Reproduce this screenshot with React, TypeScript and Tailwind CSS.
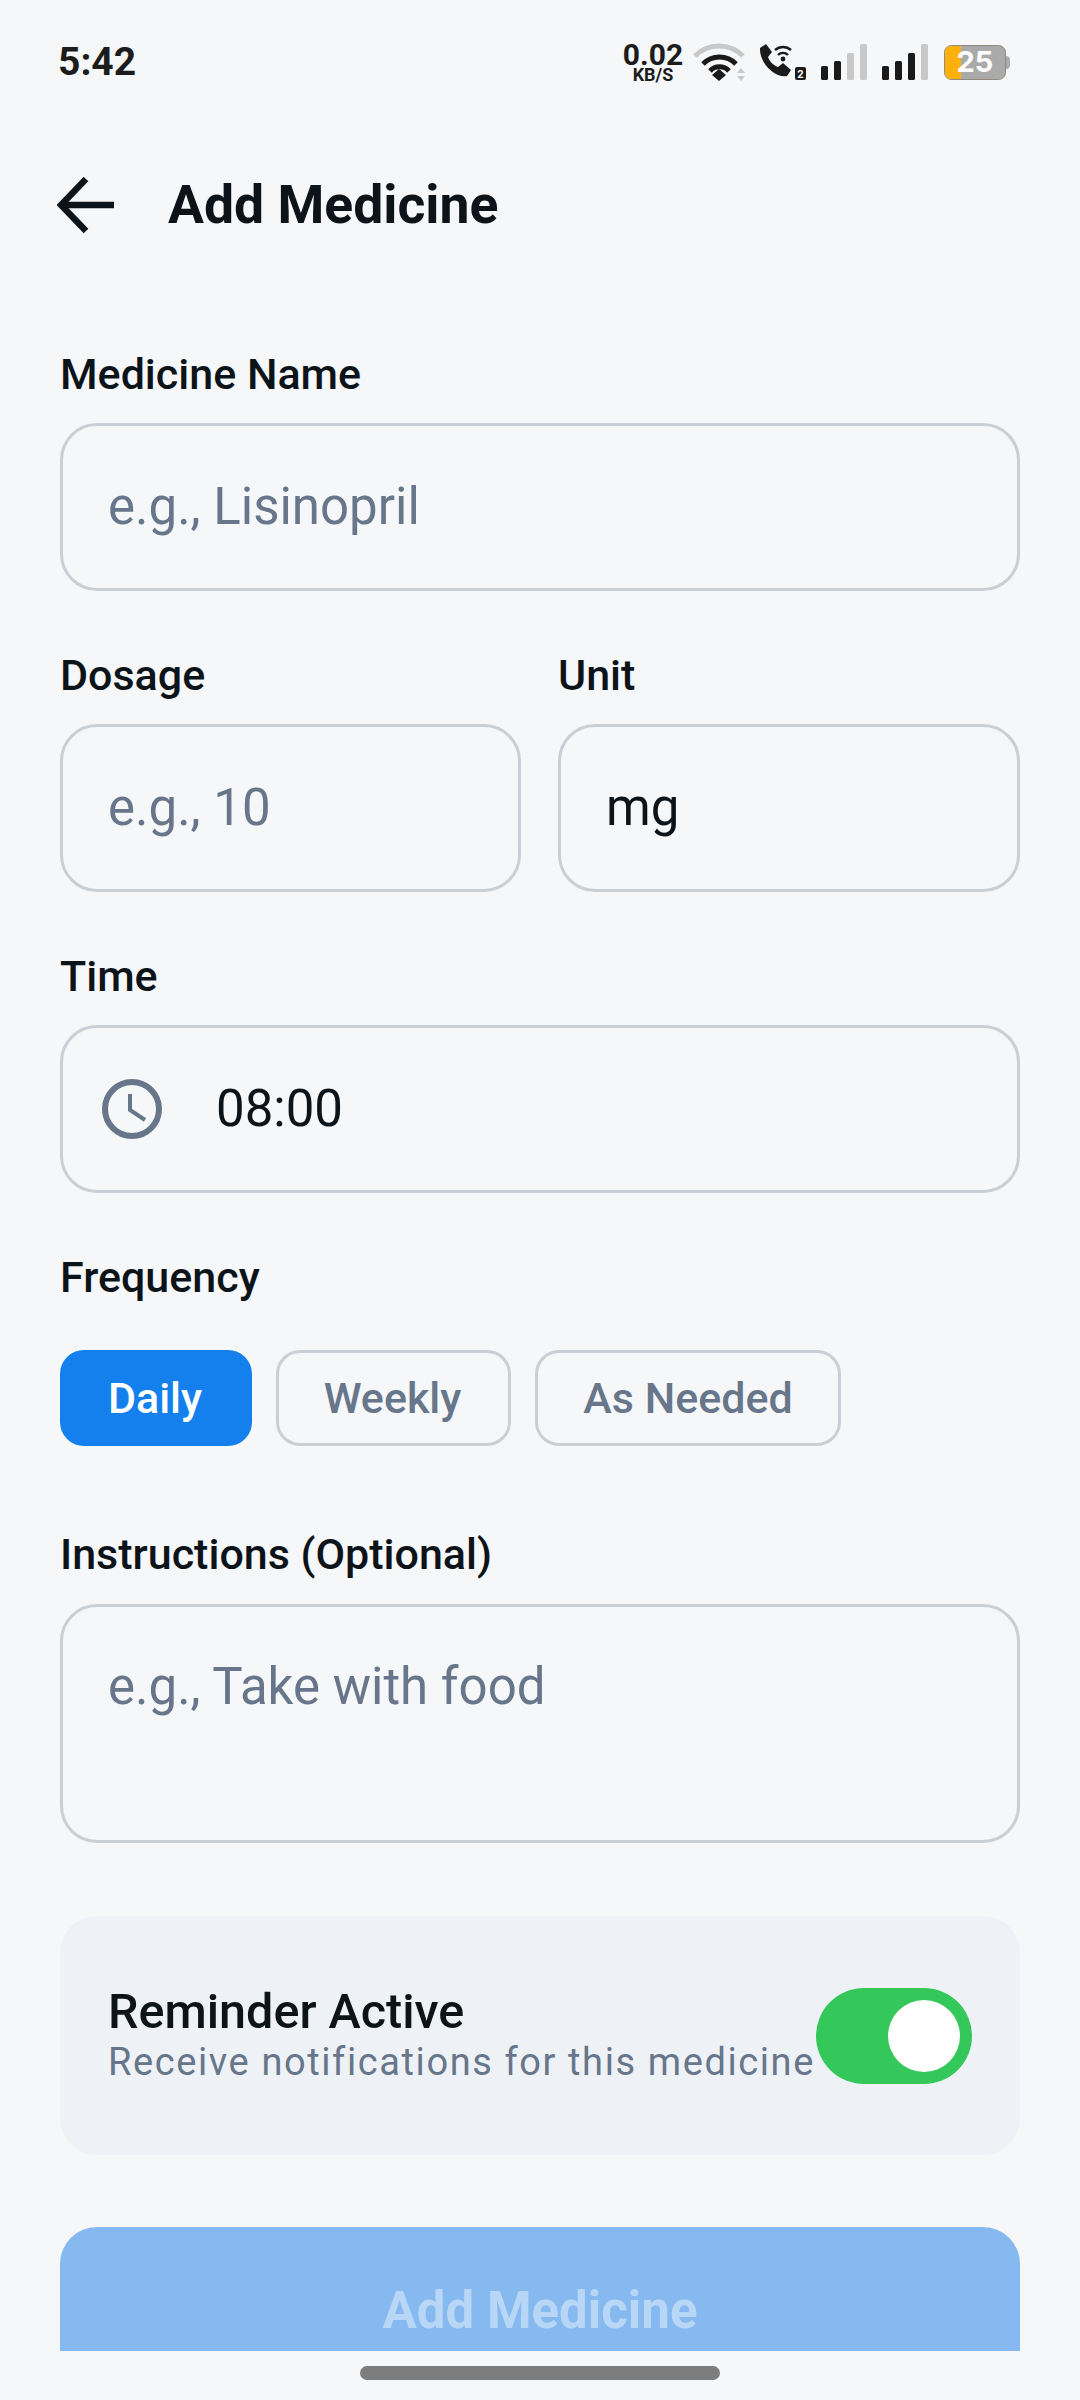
import React from "react";

function Label({ children }: { children: React.ReactNode }) {
  return <div className="h-[49px] text-[43px] leading-[49px] font-medium text-[#0d1419]">{children}</div>;
}

function Field({ children, className = "" }: { children: React.ReactNode; className?: string }) {
  return (
    <div className={"mt-[24px] h-[168px] rounded-[37px] border-[3px] border-[#c9cfd4] flex items-center px-[45px] text-[51px] " + className}>
      {children}
    </div>
  );
}

function Signal({ dark, className }: { dark: number; className?: string }) {
  const bars = [
    { x: 0, h: 14 },
    { x: 13, h: 19 },
    { x: 26, h: 27 },
    { x: 39, h: 36 },
  ];
  return (
    <svg width="46" height="36" viewBox="0 0 46 36" className={className}>
      {bars.map((b, i) => (
        <rect key={b.x} x={b.x} y={36 - b.h} width="7" height={b.h} rx="1.5" fill={i < dark ? "#1a1a1a" : "#c8c8c8"} />
      ))}
    </svg>
  );
}

function StatusIcons() {
  return (
    <div className="flex items-center">
      <div className="w-[60px] flex flex-col items-center text-[#1c1c1c] font-bold">
        <div className="text-[30px] leading-[24px]">0.02</div>
        <div className="text-[18px] leading-[15px]">KB/S</div>
      </div>
      <svg width="52" height="38" viewBox="0 0 52 38" className="ml-[10px]">
        <path d="M2 13 A34 34 0 0 1 50 13" fill="none" stroke="#c8c8c8" strokeWidth="5" />
        <path d="M10 21 A23 23 0 0 1 43 21" fill="none" stroke="#1a1a1a" strokeWidth="5" />
        <path d="M17 28 A13 13 0 0 1 36 28" fill="none" stroke="#1a1a1a" strokeWidth="5" />
        <path d="M19 32 L26 26 L33 32 L26 38 Z" fill="#1a1a1a" />
        <path d="M44 30 L48 25 L52 30 Z M44 33 L52 33 L48 38 Z" fill="#c8c8c8" />
      </svg>
      <svg width="50" height="38" viewBox="0 0 50 38" className="ml-[13px]">
        <path d="M2 5 L8 1 L14 9 L10 14 C12 19 15 22 20 24 L25 20 L33 27 L29 33 C16 35 1 19 2 5 Z" fill="#1a1a1a" />
        <path d="M17 7 A12 12 0 0 1 33 7 M20 12 A7 7 0 0 1 30 12" fill="none" stroke="#1a1a1a" strokeWidth="2.4" />
        <circle cx="25" cy="16" r="2.4" fill="#1a1a1a" />
        <rect x="37" y="24" width="11" height="13" rx="2" fill="#1a1a1a" />
        <text x="42.5" y="35" textAnchor="middle" fontSize="11" fontWeight="700" fill="#fff" fontFamily="Roboto">2</text>
      </svg>
      <Signal className="ml-[13px]" dark={2} />
      <Signal className="ml-[15px]" dark={3} />
      <svg width="66" height="35" viewBox="0 0 66 35" className="ml-[16px]">
        <rect x="0.5" y="0.5" width="61" height="34" rx="7" fill="#aaaaaa" stroke="#8f8a7c" />
        <path d="M7 1 H17 V34 H7 A6 6 0 0 1 1 28 V7 A6 6 0 0 1 7 1 Z" fill="#fdb10a" />
        <path d="M62 11 C65 11 66 13 66 15 V20 C66 22 65 24 62 24 Z" fill="#aaaaaa" />
        <text x="31" y="27" textAnchor="middle" fontSize="29" fontWeight="700" fill="#fff" fontFamily="Inter">25</text>
      </svg>
    </div>
  );
}

export default function App() {
  return (
    <div className="h-[2400px] w-[1080px] overflow-hidden bg-[#f5f7f9] font-['Roboto',sans-serif] flex flex-col">
      <div className="h-[124px] flex items-center justify-between pl-[58px] pr-[70px]">
        <div className="text-[39px] font-bold text-[#1c1c1c] leading-none">5:42</div>
        <StatusIcons />
      </div>
      <div className="h-[162px] flex items-center pl-[57px]">
        <svg width="58" height="58" viewBox="0 0 58 58" fill="none" stroke="#0d1419" strokeWidth="6.5">
          <path d="M57 29 H4" />
          <path d="M29 3 L4 29 L29 55" />
        </svg>
        <div className="ml-[53px] text-[53.5px] font-bold text-[#0d1419] leading-none">Add Medicine</div>
      </div>
      <div className="px-[60px] flex flex-col flex-1 min-h-0">
        <div className="mt-[64px]">
          <Label>Medicine Name</Label>
          <Field className="text-[#67768a]">e.g., Lisinopril</Field>
        </div>
        <div className="mt-[60px] flex gap-[37px]">
          <div className="w-[461px]">
            <Label>Dosage</Label>
            <Field className="text-[#67768a]">e.g., 10</Field>
          </div>
          <div className="flex-1">
            <Label>Unit</Label>
            <Field className="text-[#0d1419]">mg</Field>
          </div>
        </div>
        <div className="mt-[60px]">
          <Label>Time</Label>
          <Field className="text-[#0d1419]">
            <svg width="60" height="60" viewBox="0 0 60 60" fill="none" stroke="#67768a" className="-ml-[6px]">
              <circle cx="30" cy="30" r="27" strokeWidth="6" />
              <path d="M28 15 V31 L43 41" strokeWidth="4" />
            </svg>
            <span className="ml-[54px]">08:00</span>
          </Field>
        </div>
        <div className="mt-[60px]">
          <Label>Frequency</Label>
          <div className="mt-[48px] flex gap-[24px] text-[43px] font-medium">
            <div className="h-[96px] w-[192px] rounded-[24px] bg-[#1380ed] text-white flex items-center justify-center pr-[2px]">Daily</div>
            <div className="h-[96px] w-[235px] rounded-[24px] border-[3px] border-[#c9cfd4] text-[#67768a] flex items-center justify-center pr-[2px]">Weekly</div>
            <div className="h-[96px] w-[306px] rounded-[24px] border-[3px] border-[#c9cfd4] text-[#67768a] flex items-center justify-center">As Needed</div>
          </div>
        </div>
        <div className="mt-[84px]">
          <Label>Instructions (Optional)</Label>
          <div className="mt-[25px] h-[239px] rounded-[37px] border-[3px] border-[#c9cfd4] px-[45px] pt-[50px] text-[51px] leading-[60px] text-[#67768a]">
            e.g., Take with food
          </div>
        </div>
        <div className="mt-[73px] h-[239px] rounded-[37px] bg-[#eef2f6] flex items-center pl-[48px] pr-[48px]">
          <div className="flex-1 min-w-0">
            <div className="text-[48.5px] font-medium text-[#0d1419] leading-[52px]">Reminder Active</div>
            <div className="text-[38px] text-[#67768a] leading-[48px] tracking-[1.6px] whitespace-nowrap">Receive notifications for this medicine</div>
          </div>
          <div className="w-[156px] h-[96px] rounded-full bg-[#34c759] flex items-center justify-end pr-[12px] shrink-0">
            <div className="w-[72px] h-[72px] rounded-full bg-white" />
          </div>
        </div>
        <div className="mt-[72px] h-[124px] rounded-t-[37px] bg-[#86b9ef] overflow-hidden flex justify-center pt-[54px] text-[51px] font-bold text-[#b8d6f5] leading-[60px]">
          Add Medicine
        </div>
        <div className="mt-[15px] mx-auto h-[14px] w-[360px] rounded-full bg-[#7d7d7d]" />
      </div>
    </div>
  );
}
